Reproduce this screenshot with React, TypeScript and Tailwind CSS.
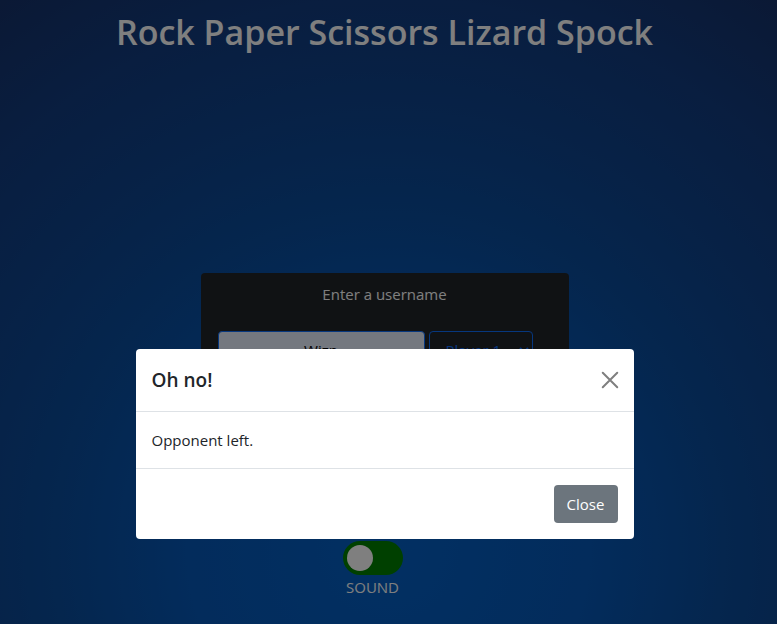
export default function App() {
  return (
    <div className="relative min-h-screen overflow-hidden bg-[radial-gradient(circle_at_50%_88%,#0460c6_0%,#0658b8_30%,#0a4c9c_50%,#0e448e_65%,#123c80_82%,#16326a_100%)] pr-2 font-['Open_Sans','Noto_Sans',sans-serif] text-[15px] leading-6 text-white">
      <main className="flex flex-col items-center">
        <h1 className="mt-2 text-center text-[34px] leading-[48px] font-semibold">Rock Paper Scissors Lizard Spock</h1>
        <section className="mt-[217px] flex h-[240px] w-[368px] flex-col rounded bg-[#212529]">
          <label htmlFor="username" className="flex h-[42px] items-center justify-center">Enter a username</label>
          <div className="mt-4 flex gap-1 px-[17px]">
            <input id="username" defaultValue="Wizp" className="h-[38px] w-[207px] rounded border border-[#0d6efd] bg-[#e8f0fe] text-center text-black" />
            <select aria-label="Player" className="h-[38px] w-[104px] rounded border border-[#0d6efd] bg-[#212529] px-3 text-[#0d6efd]">
              <option>Player 1</option>
            </select>
          </div>
        </section>
        <label className="mt-7 mr-6 flex flex-col items-center">
          <input type="checkbox" defaultChecked className="peer sr-only" />
          <span className="flex h-[34px] w-[60px] items-center rounded-full bg-[#008000] px-1">
            <span className="size-[26px] rounded-full bg-white" />
          </span>
          <span>SOUND</span>
        </label>
      </main>
      <div className="fixed inset-0 bg-black/50 pt-[349px] pr-2">
        <div role="dialog" aria-modal="true" aria-labelledby="dialog-title" className="mx-auto w-[498px] max-w-full rounded bg-white text-[#212529]">
          <header className="flex h-[63px] items-center justify-between border-b border-[#dee2e6] px-4">
            <h2 id="dialog-title" className="text-[19px] font-semibold">Oh no!</h2>
            <button aria-label="Close dialog" className="text-[#7f7f7f]">
              <svg viewBox="0 0 16 16" className="size-4 overflow-visible" fill="none" stroke="currentColor" strokeWidth="2" strokeLinecap="round">
                <path d="M.75 .75 15.25 15.25M15.25 .75 .75 15.25" />
              </svg>
            </button>
          </header>
          <p className="p-4">Opponent left.</p>
          <footer className="flex justify-end border-t border-[#dee2e6] p-4">
            <button className="h-[38px] w-16 rounded bg-[#6c757d] text-white">Close</button>
          </footer>
        </div>
      </div>
    </div>
  );
}
